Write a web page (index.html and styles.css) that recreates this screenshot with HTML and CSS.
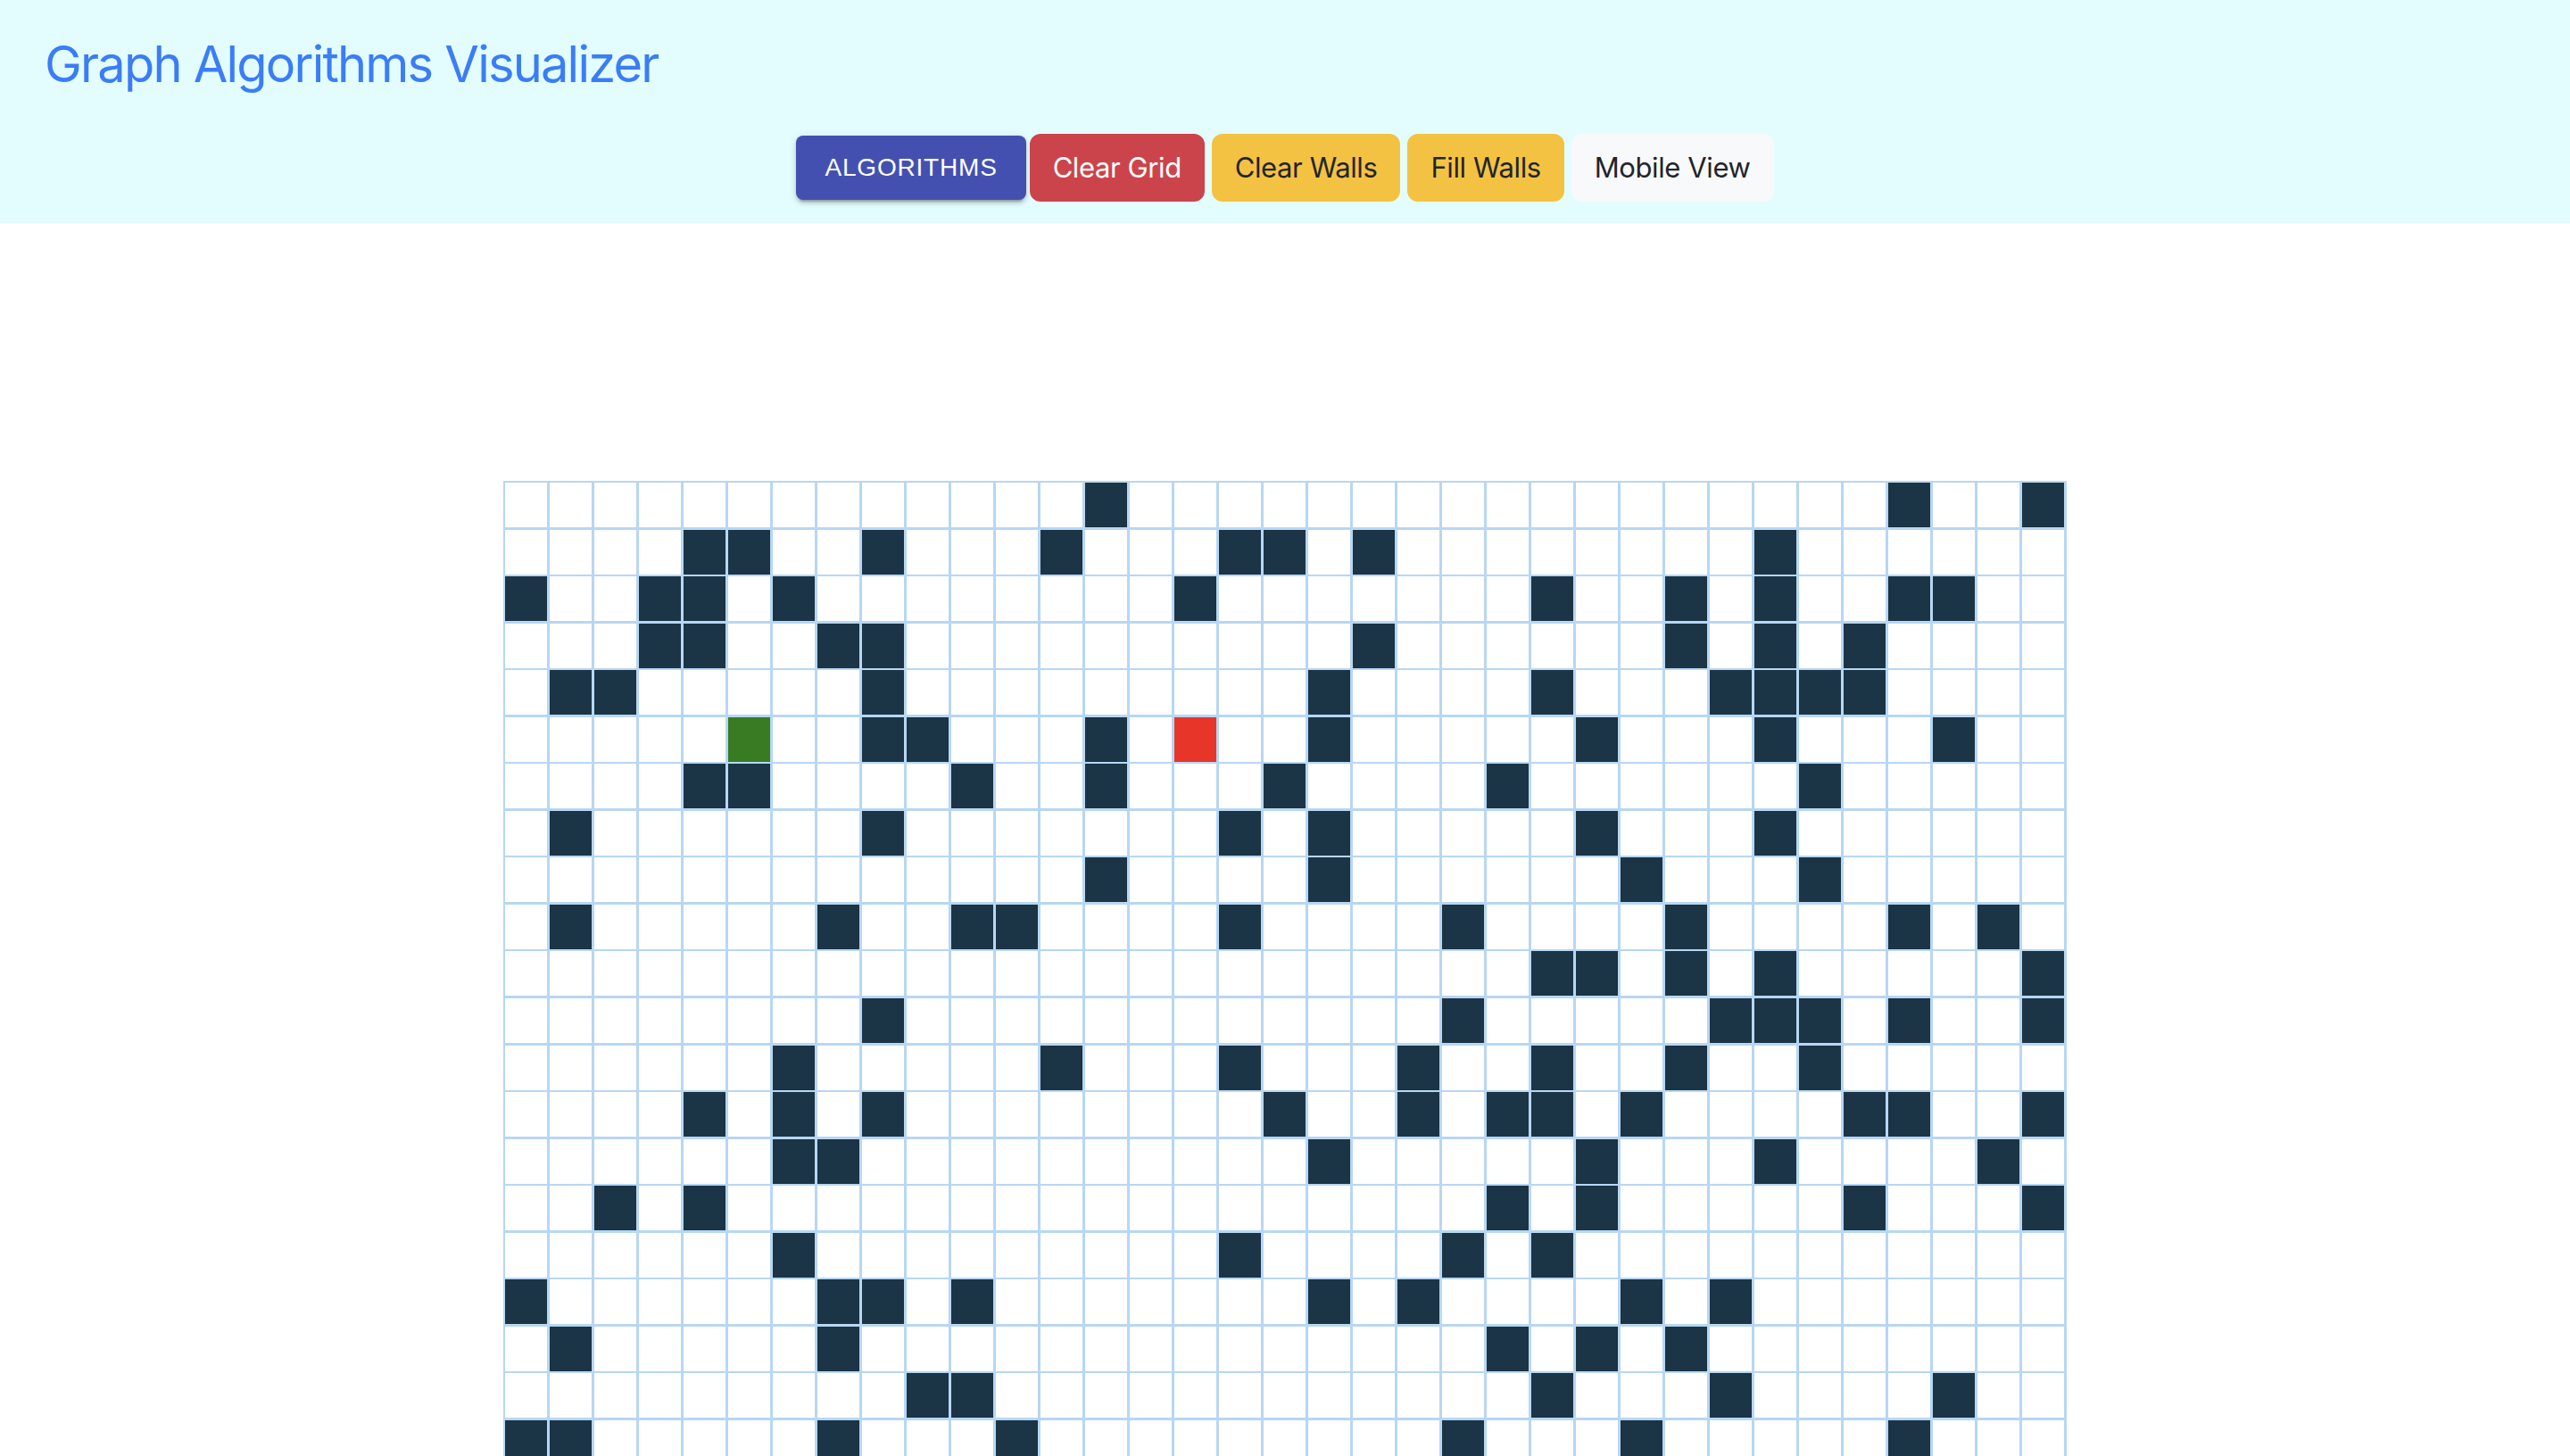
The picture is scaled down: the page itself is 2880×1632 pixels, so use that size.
FILE: index.html
```html
<!DOCTYPE html>
<html lang="en">
<head>
<meta charset="utf-8">
<title>Graph Algorithms Visualizer</title>
<link rel="stylesheet" href="styles.css">
</head>
<body>
<header class="topbar">
  <h1 class="title">Graph Algorithms Visualizer</h1>
  <div class="actions">
    <button class="btn-algo">Algorithms</button>
    <button class="btn btn-red btn-first">Clear Grid</button>
    <button class="btn btn-yellow">Clear Walls</button>
    <button class="btn btn-yellow">Fill Walls</button>
    <button class="btn btn-light">Mobile View</button>
  </div>
</header>
<main class="stage">
  <div class="board">
<i class="n"></i><i class="n"></i><i class="n"></i><i class="n"></i><i class="n"></i><i class="n"></i><i class="n"></i><i class="n"></i><i class="n"></i><i class="n"></i><i class="n"></i><i class="n"></i><i class="n"></i><i class="n w"></i><i class="n"></i><i class="n"></i><i class="n"></i><i class="n"></i><i class="n"></i><i class="n"></i><i class="n"></i><i class="n"></i><i class="n"></i><i class="n"></i><i class="n"></i><i class="n"></i><i class="n"></i><i class="n"></i><i class="n"></i><i class="n"></i><i class="n"></i><i class="n w"></i><i class="n"></i><i class="n"></i><i class="n w"></i>
<i class="n"></i><i class="n"></i><i class="n"></i><i class="n"></i><i class="n w"></i><i class="n w"></i><i class="n"></i><i class="n"></i><i class="n w"></i><i class="n"></i><i class="n"></i><i class="n"></i><i class="n w"></i><i class="n"></i><i class="n"></i><i class="n"></i><i class="n w"></i><i class="n w"></i><i class="n"></i><i class="n w"></i><i class="n"></i><i class="n"></i><i class="n"></i><i class="n"></i><i class="n"></i><i class="n"></i><i class="n"></i><i class="n"></i><i class="n w"></i><i class="n"></i><i class="n"></i><i class="n"></i><i class="n"></i><i class="n"></i><i class="n"></i>
<i class="n w"></i><i class="n"></i><i class="n"></i><i class="n w"></i><i class="n w"></i><i class="n"></i><i class="n w"></i><i class="n"></i><i class="n"></i><i class="n"></i><i class="n"></i><i class="n"></i><i class="n"></i><i class="n"></i><i class="n"></i><i class="n w"></i><i class="n"></i><i class="n"></i><i class="n"></i><i class="n"></i><i class="n"></i><i class="n"></i><i class="n"></i><i class="n w"></i><i class="n"></i><i class="n"></i><i class="n w"></i><i class="n"></i><i class="n w"></i><i class="n"></i><i class="n"></i><i class="n w"></i><i class="n w"></i><i class="n"></i><i class="n"></i>
<i class="n"></i><i class="n"></i><i class="n"></i><i class="n w"></i><i class="n w"></i><i class="n"></i><i class="n"></i><i class="n w"></i><i class="n w"></i><i class="n"></i><i class="n"></i><i class="n"></i><i class="n"></i><i class="n"></i><i class="n"></i><i class="n"></i><i class="n"></i><i class="n"></i><i class="n"></i><i class="n w"></i><i class="n"></i><i class="n"></i><i class="n"></i><i class="n"></i><i class="n"></i><i class="n"></i><i class="n w"></i><i class="n"></i><i class="n w"></i><i class="n"></i><i class="n w"></i><i class="n"></i><i class="n"></i><i class="n"></i><i class="n"></i>
<i class="n"></i><i class="n w"></i><i class="n w"></i><i class="n"></i><i class="n"></i><i class="n"></i><i class="n"></i><i class="n"></i><i class="n w"></i><i class="n"></i><i class="n"></i><i class="n"></i><i class="n"></i><i class="n"></i><i class="n"></i><i class="n"></i><i class="n"></i><i class="n"></i><i class="n w"></i><i class="n"></i><i class="n"></i><i class="n"></i><i class="n"></i><i class="n w"></i><i class="n"></i><i class="n"></i><i class="n"></i><i class="n w"></i><i class="n w"></i><i class="n w"></i><i class="n w"></i><i class="n"></i><i class="n"></i><i class="n"></i><i class="n"></i>
<i class="n"></i><i class="n"></i><i class="n"></i><i class="n"></i><i class="n"></i><i class="n start"></i><i class="n"></i><i class="n"></i><i class="n w"></i><i class="n w"></i><i class="n"></i><i class="n"></i><i class="n"></i><i class="n w"></i><i class="n"></i><i class="n end"></i><i class="n"></i><i class="n"></i><i class="n w"></i><i class="n"></i><i class="n"></i><i class="n"></i><i class="n"></i><i class="n"></i><i class="n w"></i><i class="n"></i><i class="n"></i><i class="n"></i><i class="n w"></i><i class="n"></i><i class="n"></i><i class="n"></i><i class="n w"></i><i class="n"></i><i class="n"></i>
<i class="n"></i><i class="n"></i><i class="n"></i><i class="n"></i><i class="n w"></i><i class="n w"></i><i class="n"></i><i class="n"></i><i class="n"></i><i class="n"></i><i class="n w"></i><i class="n"></i><i class="n"></i><i class="n w"></i><i class="n"></i><i class="n"></i><i class="n"></i><i class="n w"></i><i class="n"></i><i class="n"></i><i class="n"></i><i class="n"></i><i class="n w"></i><i class="n"></i><i class="n"></i><i class="n"></i><i class="n"></i><i class="n"></i><i class="n"></i><i class="n w"></i><i class="n"></i><i class="n"></i><i class="n"></i><i class="n"></i><i class="n"></i>
<i class="n"></i><i class="n w"></i><i class="n"></i><i class="n"></i><i class="n"></i><i class="n"></i><i class="n"></i><i class="n"></i><i class="n w"></i><i class="n"></i><i class="n"></i><i class="n"></i><i class="n"></i><i class="n"></i><i class="n"></i><i class="n"></i><i class="n w"></i><i class="n"></i><i class="n w"></i><i class="n"></i><i class="n"></i><i class="n"></i><i class="n"></i><i class="n"></i><i class="n w"></i><i class="n"></i><i class="n"></i><i class="n"></i><i class="n w"></i><i class="n"></i><i class="n"></i><i class="n"></i><i class="n"></i><i class="n"></i><i class="n"></i>
<i class="n"></i><i class="n"></i><i class="n"></i><i class="n"></i><i class="n"></i><i class="n"></i><i class="n"></i><i class="n"></i><i class="n"></i><i class="n"></i><i class="n"></i><i class="n"></i><i class="n"></i><i class="n w"></i><i class="n"></i><i class="n"></i><i class="n"></i><i class="n"></i><i class="n w"></i><i class="n"></i><i class="n"></i><i class="n"></i><i class="n"></i><i class="n"></i><i class="n"></i><i class="n w"></i><i class="n"></i><i class="n"></i><i class="n"></i><i class="n w"></i><i class="n"></i><i class="n"></i><i class="n"></i><i class="n"></i><i class="n"></i>
<i class="n"></i><i class="n w"></i><i class="n"></i><i class="n"></i><i class="n"></i><i class="n"></i><i class="n"></i><i class="n w"></i><i class="n"></i><i class="n"></i><i class="n w"></i><i class="n w"></i><i class="n"></i><i class="n"></i><i class="n"></i><i class="n"></i><i class="n w"></i><i class="n"></i><i class="n"></i><i class="n"></i><i class="n"></i><i class="n w"></i><i class="n"></i><i class="n"></i><i class="n"></i><i class="n"></i><i class="n w"></i><i class="n"></i><i class="n"></i><i class="n"></i><i class="n"></i><i class="n w"></i><i class="n"></i><i class="n w"></i><i class="n"></i>
<i class="n"></i><i class="n"></i><i class="n"></i><i class="n"></i><i class="n"></i><i class="n"></i><i class="n"></i><i class="n"></i><i class="n"></i><i class="n"></i><i class="n"></i><i class="n"></i><i class="n"></i><i class="n"></i><i class="n"></i><i class="n"></i><i class="n"></i><i class="n"></i><i class="n"></i><i class="n"></i><i class="n"></i><i class="n"></i><i class="n"></i><i class="n w"></i><i class="n w"></i><i class="n"></i><i class="n w"></i><i class="n"></i><i class="n w"></i><i class="n"></i><i class="n"></i><i class="n"></i><i class="n"></i><i class="n"></i><i class="n w"></i>
<i class="n"></i><i class="n"></i><i class="n"></i><i class="n"></i><i class="n"></i><i class="n"></i><i class="n"></i><i class="n"></i><i class="n w"></i><i class="n"></i><i class="n"></i><i class="n"></i><i class="n"></i><i class="n"></i><i class="n"></i><i class="n"></i><i class="n"></i><i class="n"></i><i class="n"></i><i class="n"></i><i class="n"></i><i class="n w"></i><i class="n"></i><i class="n"></i><i class="n"></i><i class="n"></i><i class="n"></i><i class="n w"></i><i class="n w"></i><i class="n w"></i><i class="n"></i><i class="n w"></i><i class="n"></i><i class="n"></i><i class="n w"></i>
<i class="n"></i><i class="n"></i><i class="n"></i><i class="n"></i><i class="n"></i><i class="n"></i><i class="n w"></i><i class="n"></i><i class="n"></i><i class="n"></i><i class="n"></i><i class="n"></i><i class="n w"></i><i class="n"></i><i class="n"></i><i class="n"></i><i class="n w"></i><i class="n"></i><i class="n"></i><i class="n"></i><i class="n w"></i><i class="n"></i><i class="n"></i><i class="n w"></i><i class="n"></i><i class="n"></i><i class="n w"></i><i class="n"></i><i class="n"></i><i class="n w"></i><i class="n"></i><i class="n"></i><i class="n"></i><i class="n"></i><i class="n"></i>
<i class="n"></i><i class="n"></i><i class="n"></i><i class="n"></i><i class="n w"></i><i class="n"></i><i class="n w"></i><i class="n"></i><i class="n w"></i><i class="n"></i><i class="n"></i><i class="n"></i><i class="n"></i><i class="n"></i><i class="n"></i><i class="n"></i><i class="n"></i><i class="n w"></i><i class="n"></i><i class="n"></i><i class="n w"></i><i class="n"></i><i class="n w"></i><i class="n w"></i><i class="n"></i><i class="n w"></i><i class="n"></i><i class="n"></i><i class="n"></i><i class="n"></i><i class="n w"></i><i class="n w"></i><i class="n"></i><i class="n"></i><i class="n w"></i>
<i class="n"></i><i class="n"></i><i class="n"></i><i class="n"></i><i class="n"></i><i class="n"></i><i class="n w"></i><i class="n w"></i><i class="n"></i><i class="n"></i><i class="n"></i><i class="n"></i><i class="n"></i><i class="n"></i><i class="n"></i><i class="n"></i><i class="n"></i><i class="n"></i><i class="n w"></i><i class="n"></i><i class="n"></i><i class="n"></i><i class="n"></i><i class="n"></i><i class="n w"></i><i class="n"></i><i class="n"></i><i class="n"></i><i class="n w"></i><i class="n"></i><i class="n"></i><i class="n"></i><i class="n"></i><i class="n w"></i><i class="n"></i>
<i class="n"></i><i class="n"></i><i class="n w"></i><i class="n"></i><i class="n w"></i><i class="n"></i><i class="n"></i><i class="n"></i><i class="n"></i><i class="n"></i><i class="n"></i><i class="n"></i><i class="n"></i><i class="n"></i><i class="n"></i><i class="n"></i><i class="n"></i><i class="n"></i><i class="n"></i><i class="n"></i><i class="n"></i><i class="n"></i><i class="n w"></i><i class="n"></i><i class="n w"></i><i class="n"></i><i class="n"></i><i class="n"></i><i class="n"></i><i class="n"></i><i class="n w"></i><i class="n"></i><i class="n"></i><i class="n"></i><i class="n w"></i>
<i class="n"></i><i class="n"></i><i class="n"></i><i class="n"></i><i class="n"></i><i class="n"></i><i class="n w"></i><i class="n"></i><i class="n"></i><i class="n"></i><i class="n"></i><i class="n"></i><i class="n"></i><i class="n"></i><i class="n"></i><i class="n"></i><i class="n w"></i><i class="n"></i><i class="n"></i><i class="n"></i><i class="n"></i><i class="n w"></i><i class="n"></i><i class="n w"></i><i class="n"></i><i class="n"></i><i class="n"></i><i class="n"></i><i class="n"></i><i class="n"></i><i class="n"></i><i class="n"></i><i class="n"></i><i class="n"></i><i class="n"></i>
<i class="n w"></i><i class="n"></i><i class="n"></i><i class="n"></i><i class="n"></i><i class="n"></i><i class="n"></i><i class="n w"></i><i class="n w"></i><i class="n"></i><i class="n w"></i><i class="n"></i><i class="n"></i><i class="n"></i><i class="n"></i><i class="n"></i><i class="n"></i><i class="n"></i><i class="n w"></i><i class="n"></i><i class="n w"></i><i class="n"></i><i class="n"></i><i class="n"></i><i class="n"></i><i class="n w"></i><i class="n"></i><i class="n w"></i><i class="n"></i><i class="n"></i><i class="n"></i><i class="n"></i><i class="n"></i><i class="n"></i><i class="n"></i>
<i class="n"></i><i class="n w"></i><i class="n"></i><i class="n"></i><i class="n"></i><i class="n"></i><i class="n"></i><i class="n w"></i><i class="n"></i><i class="n"></i><i class="n"></i><i class="n"></i><i class="n"></i><i class="n"></i><i class="n"></i><i class="n"></i><i class="n"></i><i class="n"></i><i class="n"></i><i class="n"></i><i class="n"></i><i class="n"></i><i class="n w"></i><i class="n"></i><i class="n w"></i><i class="n"></i><i class="n w"></i><i class="n"></i><i class="n"></i><i class="n"></i><i class="n"></i><i class="n"></i><i class="n"></i><i class="n"></i><i class="n"></i>
<i class="n"></i><i class="n"></i><i class="n"></i><i class="n"></i><i class="n"></i><i class="n"></i><i class="n"></i><i class="n"></i><i class="n"></i><i class="n w"></i><i class="n w"></i><i class="n"></i><i class="n"></i><i class="n"></i><i class="n"></i><i class="n"></i><i class="n"></i><i class="n"></i><i class="n"></i><i class="n"></i><i class="n"></i><i class="n"></i><i class="n"></i><i class="n w"></i><i class="n"></i><i class="n"></i><i class="n"></i><i class="n w"></i><i class="n"></i><i class="n"></i><i class="n"></i><i class="n"></i><i class="n w"></i><i class="n"></i><i class="n"></i>
<i class="n w"></i><i class="n w"></i><i class="n"></i><i class="n"></i><i class="n"></i><i class="n"></i><i class="n"></i><i class="n w"></i><i class="n"></i><i class="n"></i><i class="n"></i><i class="n w"></i><i class="n"></i><i class="n"></i><i class="n"></i><i class="n"></i><i class="n"></i><i class="n"></i><i class="n"></i><i class="n"></i><i class="n"></i><i class="n w"></i><i class="n"></i><i class="n"></i><i class="n"></i><i class="n w"></i><i class="n"></i><i class="n"></i><i class="n"></i><i class="n"></i><i class="n"></i><i class="n w"></i><i class="n"></i><i class="n"></i><i class="n"></i>
  </div>
</main>
</body>
</html>
```

FILE: styles.css
```css
* {
  box-sizing: border-box;
}

html,
body {
  margin: 0;
  height: 100%;
  overflow: hidden;
  background: #ffffff;
}

body {
  font-family: Inter, "Liberation Sans", sans-serif;
  color: #212529;
}

.topbar {
  background: #e3fdfe;
  padding: 38px 0 24px;
}

.title {
  margin: 0;
  padding-left: 50px;
  font-family: Inter, "Liberation Sans", sans-serif;
  font-weight: 400;
  font-size: 56px;
  line-height: 68px;
  letter-spacing: -1.8px;
  color: #3b7df6;
}

.actions {
  display: flex;
  justify-content: center;
  align-items: center;
  margin-top: 44px;
}

.btn-algo {
  font-family: "Liberation Sans", Arial, sans-serif;
  font-size: 28px;
  line-height: 48px;
  letter-spacing: 0.8px;
  text-transform: uppercase;
  padding: 12px 32px;
  border: 0;
  border-radius: 8px;
  background: #4450b0;
  color: #ffffff;
  box-shadow: 0 6px 2px -4px rgba(0, 0, 0, 0.2), 0 4px 4px 0 rgba(0, 0, 0, 0.14), 0 2px 10px 0 rgba(0, 0, 0, 0.12);
}

.btn {
  font-family: Inter, "Liberation Sans", sans-serif;
  font-size: 31px;
  line-height: 48px;
  letter-spacing: -0.4px;
  padding: 12px 24px;
  border: 2px solid transparent;
  border-radius: 12px;
  margin-left: 8px;
  color: #212529;
}

.btn-first {
  margin-left: 4px;
}

.btn-red {
  background: #cc444b;
  border-color: #cc444b;
  color: #ffffff;
}

.btn-yellow {
  background: #f4c243;
  border-color: #f4c243;
}

.btn-light {
  background: #f8f9fb;
  border-color: #f8f9fb;
}

.stage {
  padding-top: 289px;
  display: flex;
  justify-content: center;
}

.board {
  display: grid;
  grid-template-columns: repeat(35, 47px);
  grid-auto-rows: 50px;
  column-gap: 3px;
  row-gap: 2.55px;
  padding: 2px 3px 3px 2px;
  background: #b7d7f3;
}

.n {
  display: block;
  background: #ffffff;
}

.w {
  background: #1b3446;
}

.start {
  background: #397b22;
}

.end {
  background: #e8352a;
}
```
